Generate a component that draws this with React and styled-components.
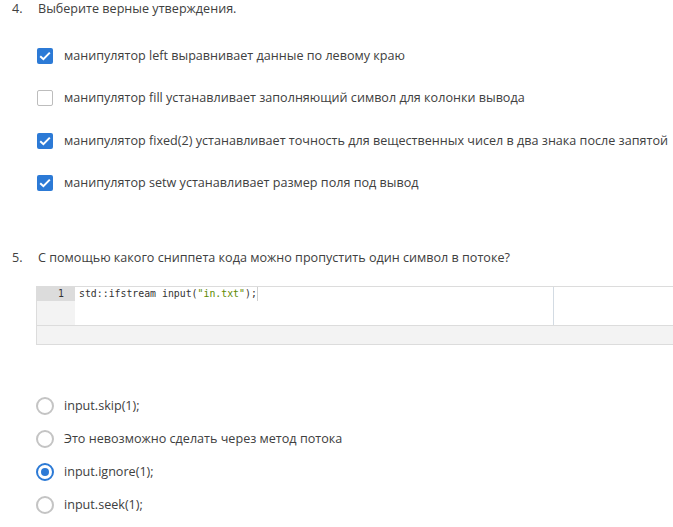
import React from 'react';
import styled, { createGlobalStyle } from 'styled-components';

const BLUE = '#2c7ad6';
const TEXT = '#404040';

const GlobalStyle = createGlobalStyle`
  html, body {
    margin: 0;
    padding: 0;
    background: #fff;
  }
  body {
    font-family: "Open Sans", "Noto Sans", sans-serif;
    font-size: 12.6px;
    color: ${TEXT};
    overflow: hidden;
  }
`;

const Page = styled.div`
  width: 673px;
  height: 527px;
  overflow: hidden;
  padding-left: 12px;
  box-sizing: border-box;
`;

const Question = styled.section`
  margin-top: ${p => p.$top}px;
`;

const Heading = styled.div`
  display: flex;
  line-height: 18px;
  height: 18px;
`;

const Num = styled.span`
  width: 26px;
  flex-shrink: 0;
`;

const Options = styled.div`
  display: flex;
  flex-direction: column;
  gap: ${p => p.$gap}px;
  margin-top: ${p => p.$top}px;
  padding-left: ${p => p.$left}px;
`;

const Option = styled.label`
  display: flex;
  align-items: center;
  height: 18px;
  line-height: 18px;
  white-space: nowrap;
`;

const Box = styled.span`
  width: 16px;
  height: 16px;
  box-sizing: border-box;
  border-radius: 2px;
  margin-right: 11px;
  flex-shrink: 0;
  display: flex;
  align-items: center;
  justify-content: center;
  background: ${p => (p.$checked ? BLUE : '#fff')};
  border: ${p => (p.$checked ? 'none' : '1.5px solid #bdbdbd')};
`;

const Radio = styled.span`
  width: 18px;
  height: 18px;
  box-sizing: border-box;
  border-radius: 50%;
  margin-right: 10px;
  flex-shrink: 0;
  display: flex;
  align-items: center;
  justify-content: center;
  border: 2px solid ${p => (p.$checked ? BLUE : '#c4c4c4')};

  &::after {
    content: '';
    display: ${p => (p.$checked ? 'block' : 'none')};
    width: 8px;
    height: 8px;
    border-radius: 50%;
    background: ${BLUE};
  }
`;

const Editor = styled.div`
  margin-top: 19px;
  margin-left: 24px;
  width: 700px;
  border: 1px solid #dcdcdc;
  border-right: none;
`;

const EditorBody = styled.div`
  display: flex;
  height: 38px;
  border-bottom: 1px solid #dcdcdc;
`;

const Gutter = styled.div`
  width: 38px;
  background: #f3f3f3;
  flex-shrink: 0;
`;

const GutterCell = styled.div`
  height: 14px;
  line-height: 14px;
  background: #dcdcdc;
  text-align: right;
  padding-right: 11px;
  font-family: "DejaVu Sans Mono", "Liberation Mono", monospace;
  font-size: 9.85px;
  color: #333;
`;

const Code = styled.div`
  position: relative;
  flex: 1;
  padding-left: 4px;
  font-family: "DejaVu Sans Mono", "Liberation Mono", monospace;
  font-size: 9.85px;
  line-height: 14px;
  color: #333;
  white-space: pre;
`;

const CodeLine = styled.div`
  height: 14px;
`;

const Str = styled.span`
  color: #5e8a00;
`;

const Cursor = styled.span`
  display: inline-block;
  width: 1px;
  height: 14px;
  background: #d0d0d0;
  vertical-align: top;
`;

const PrintMargin = styled.div`
  position: absolute;
  top: 0;
  bottom: 0;
  left: 478px;
  width: 1px;
  background: #d3dbe3;
`;

const Footer = styled.div`
  height: 18px;
  background: #f3f3f3;
`;

const Check = () => (
  <svg width="12" height="10" viewBox="0 0 12 10">
    <path d="M1.2 5.2 L4.4 8.2 L10.8 1.6" fill="none" stroke="#fff" strokeWidth="2" />
  </svg>
);

const checks = [
  ['манипулятор left выравнивает данные по левому краю', true],
  ['манипулятор fill устанавливает заполняющий символ для колонки вывода', false],
  ['манипулятор fixed(2) устанавливает точность для вещественных чисел в два знака после запятой', true],
  ['манипулятор setw устанавливает размер поля под вывод', true],
];

const radios = [
  ['input.skip(1);', false],
  ['Это невозможно сделать через метод потока', false],
  ['input.ignore(1);', true],
  ['input.seek(1);', false],
];

const App = () => {
  return (
    <Page>
      <GlobalStyle />
      <Question $top={0}>
        <Heading>
          <Num>4.</Num>
          <span>Выберите верные утверждения.</span>
        </Heading>
        <Options $top={29} $gap={24.33} $left={25}>
          {checks.map(([text, on]) => (
            <Option key={text}>
              <Box $checked={on}>{on && <Check />}</Box>
              {text}
            </Option>
          ))}
        </Options>
      </Question>

      <Question $top={57}>
        <Heading>
          <Num>5.</Num>
          <span>С помощью какого сниппета кода можно пропустить один символ в потоке?</span>
        </Heading>
        <Editor>
          <EditorBody>
            <Gutter>
              <GutterCell>1</GutterCell>
            </Gutter>
            <Code>
              <CodeLine>
                std::ifstream input(<Str>"in.txt"</Str>);<Cursor />
              </CodeLine>
              <PrintMargin />
            </Code>
          </EditorBody>
          <Footer />
        </Editor>
        <Options $top={52.5} $gap={15} $left={24}>
          {radios.map(([text, on]) => (
            <Option key={text}>
              <Radio $checked={on} />
              {text}
            </Option>
          ))}
        </Options>
      </Question>
    </Page>
  );
};

export default App;
